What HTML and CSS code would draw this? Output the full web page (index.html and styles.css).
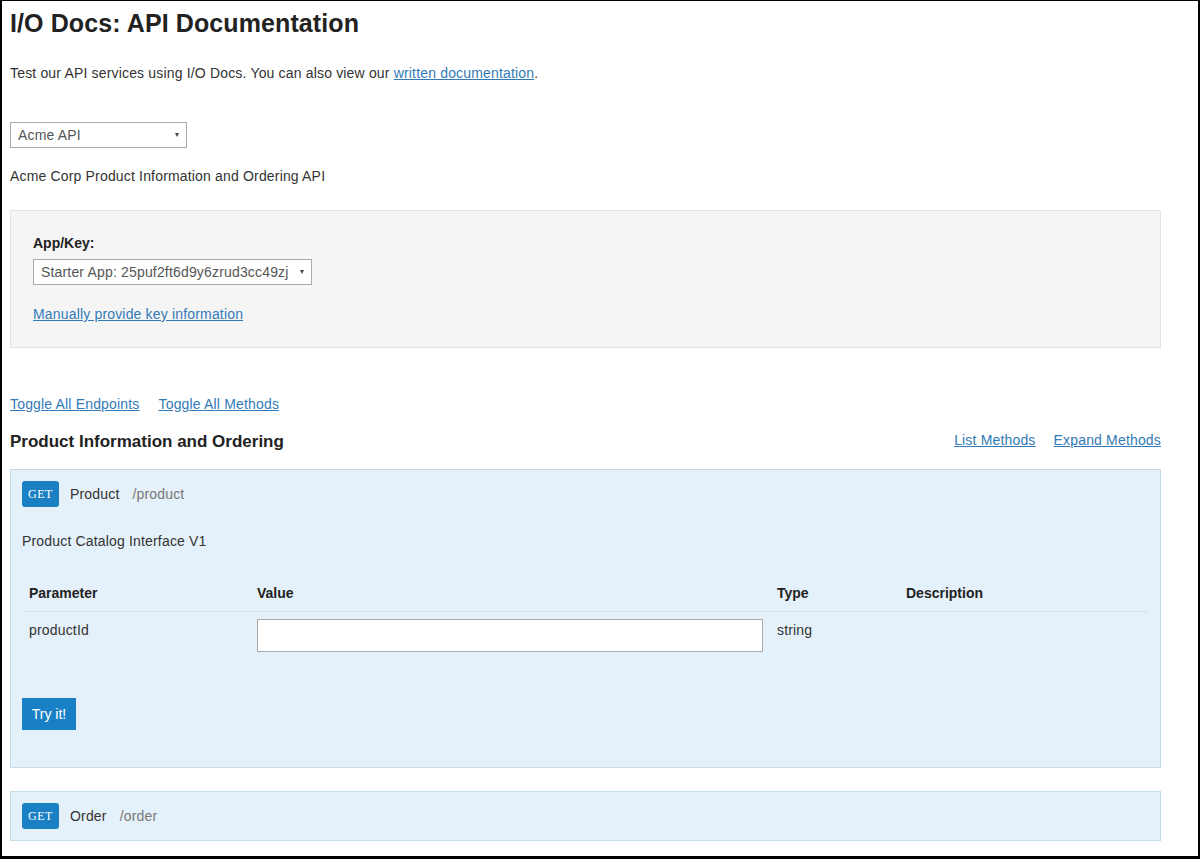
FILE: index.html
```html
<!DOCTYPE html>
<html>
<head>
<meta charset="utf-8">
<title>I/O Docs: API Documentation</title>
<link rel="stylesheet" href="styles.css">
</head>
<body>
<div class="frame">
  <div class="page">
    <h1 class="title">I/O Docs: API Documentation</h1>
    <p class="intro">Test our API services using I/O Docs. You can also view our <a href="#">written documentation</a>.</p>

    <div class="select-wrap api-select">
      <select class="select"><option>Acme API</option></select>
    </div>

    <p class="api-desc">Acme Corp Product Information and Ordering API</p>

    <div class="well">
      <div class="label">App/Key:</div>
      <div class="select-wrap key-select">
        <select class="select"><option>Starter App: 25puf2ft6d9y6zrud3cc49zj</option></select>
      </div>
      <a href="#" class="manual-link">Manually provide key information</a>
    </div>

    <div class="toggles">
      <a href="#">Toggle All Endpoints</a>
      <a href="#">Toggle All Methods</a>
    </div>

    <div class="endpoint-head">
      <h2 class="endpoint-title">Product Information and Ordering</h2>
      <div class="endpoint-actions">
        <a href="#">List Methods</a>
        <a href="#">Expand Methods</a>
      </div>
    </div>

    <div class="method open">
      <div class="method-head">
        <span class="badge">GET</span>
        <span class="method-name">Product</span>
        <span class="method-path">/product</span>
      </div>
      <p class="method-desc">Product Catalog Interface V1</p>
      <table class="params">
        <thead>
          <tr>
            <th class="c-param">Parameter</th>
            <th class="c-value">Value</th>
            <th class="c-type">Type</th>
            <th class="c-desc">Description</th>
          </tr>
        </thead>
        <tbody>
          <tr>
            <td>productId</td>
            <td><input class="value-input" type="text"></td>
            <td>string</td>
            <td></td>
          </tr>
        </tbody>
      </table>
      <button class="try-btn">Try it!</button>
    </div>

    <div class="method closed">
      <div class="method-head">
        <span class="badge">GET</span>
        <span class="method-name">Order</span>
        <span class="method-path">/order</span>
      </div>
    </div>
  </div>
</div>
</body>
</html>
```

FILE: styles.css
```css
html, body {
  margin: 0;
  padding: 0;
  background: #fff;
}

.frame {
  box-sizing: border-box;
  width: 1200px;
  height: 859px;
  border-style: solid;
  border-color: #000;
  border-width: 1px 2px 3px 2px;
  overflow: hidden;
  background: #fff;
  font-family: "Liberation Sans", Arial, sans-serif;
  font-size: 14px;
  line-height: 20px;
  letter-spacing: 0.17px;
  color: #333;
}

.page {
  width: 1151px;
  padding: 7px 0 0 8px;
}

a {
  color: #337ab7;
  text-decoration: underline;
}

.title {
  margin: 0;
  font-size: 25px;
  line-height: 30px;
  font-weight: bold;
  letter-spacing: 0.1px;
  color: #222;
}

.intro {
  margin: 25px 0 0 0;
}

.select-wrap {
  position: relative;
  box-sizing: border-box;
  height: 26px;
  border: 1px solid #aaa;
  background: #fff;
}

.select-wrap::after {
  content: "";
  position: absolute;
  top: 10px;
  right: 7px;
  border-left: 2.5px solid transparent;
  border-right: 2.5px solid transparent;
  border-top: 4px solid #444;
}

.select {
  appearance: none;
  -webkit-appearance: none;
  border: 0;
  outline: 0;
  background: transparent;
  width: 100%;
  height: 24px;
  margin: 0;
  padding: 0 20px 0 7px;
  font-family: "Liberation Sans", Arial, sans-serif;
  font-size: 14px;
  letter-spacing: 0.17px;
  color: #555;
}

.api-select {
  width: 177px;
  margin-top: 39px;
}

.api-desc {
  margin: 18px 0 0 0;
}

.well {
  box-sizing: border-box;
  margin-top: 24px;
  height: 138px;
  padding: 22px 22px 0 22px;
  background: #f5f5f5;
  border: 1px solid #e3e3e3;
}

.label {
  font-weight: bold;
  letter-spacing: 0;
  color: #222;
}

.key-select {
  width: 279px;
  margin-top: 6px;
}

.manual-link {
  display: inline-block;
  margin-top: 19px;
}

.toggles {
  display: flex;
  gap: 19px;
  margin-top: 46px;
}

.endpoint-head {
  display: flex;
  justify-content: space-between;
  align-items: flex-start;
  margin-top: 16px;
}

.endpoint-title {
  margin: 0;
  font-size: 17px;
  line-height: 24px;
  font-weight: bold;
  letter-spacing: 0;
  color: #222;
}

.endpoint-actions {
  display: flex;
  gap: 18px;
}

.method {
  box-sizing: border-box;
  background: #e5f1fa;
  border: 1px solid #c8dce8;
  padding: 11px 11px 0 11px;
}

.method.open {
  margin-top: 15px;
  height: 299px;
}

.method.closed {
  margin-top: 23px;
  height: 50px;
}

.method-head {
  display: flex;
  align-items: center;
  height: 26px;
}

.badge {
  box-sizing: border-box;
  width: 37px;
  height: 26px;
  line-height: 27px;
  text-align: center;
  background: #1a7fc3;
  color: #fff;
  border-radius: 3px;
  font-family: "Liberation Serif", "Times New Roman", serif;
  font-size: 12px;
  letter-spacing: 0.6px;
}

.method-name {
  margin-left: 11px;
  color: #333;
}

.method-path {
  margin-left: 13px;
  color: #777;
}

.method-desc {
  margin: 24px 0 0 0;
}

.params {
  margin: 24px 0 0 2px;
  width: 1124px;
  border-collapse: collapse;
}

.params th,
.params td {
  padding: 8px 5px;
  text-align: left;
  vertical-align: top;
}

.params th {
  font-weight: bold;
  letter-spacing: 0;
  color: #222;
  border-bottom: 1px solid #d5e3ec;
}

.c-param { width: 218px; }
.c-value { width: 510px; }
.c-type { width: 119px; }

.value-input {
  display: block;
  box-sizing: border-box;
  width: 506px;
  height: 33px;
  margin: -1px 0 0 0;
  border: 1px solid #aaa;
  background: #fff;
  padding: 0 6px;
  font-family: "Liberation Sans", Arial, sans-serif;
  font-size: 14px;
}

.try-btn {
  display: block;
  margin-top: 38px;
  width: 54px;
  height: 32px;
  padding: 0;
  border: 0;
  background: #1a80c6;
  color: #fff;
  font-family: "Liberation Sans", Arial, sans-serif;
  font-size: 14px;
}
```
